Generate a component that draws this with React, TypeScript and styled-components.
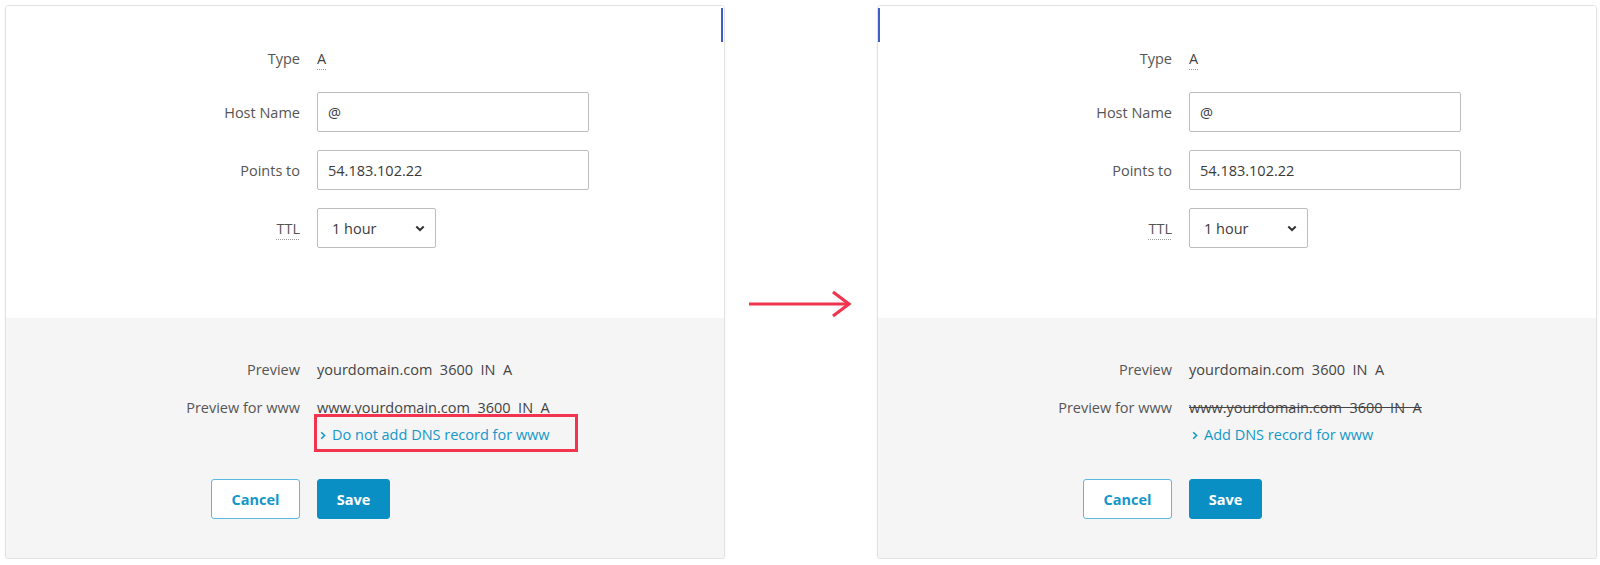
import React from 'react';
import styled, {createGlobalStyle} from 'styled-components';

const GlobalStyle = createGlobalStyle`
  html, body {
    margin: 0;
    padding: 0;
    background: #fff;
    font-family: "Open Sans", "Liberation Sans", Arial, sans-serif;
  }
`

interface RecordProps {
    barSide: 'left' | 'right',
    skipWww: boolean
}

const Chevron: React.FC = () => (
    <svg width="6" height="9" viewBox="0 0 6 9" aria-hidden="true">
        <path d="M1.2 1.2 L4.6 4.5 L1.2 7.8" fill="none" stroke="currentColor" strokeWidth="1.6"/>
    </svg>
)

const SelectCaret: React.FC = () => (
    <svg width="10" height="7" viewBox="0 0 10 7" aria-hidden="true">
        <path d="M1.3 1.5 L5 5 L8.7 1.5" fill="none" stroke="#333" strokeWidth="2"/>
    </svg>
)

const RecordCard: React.FC<RecordProps> = ({barSide, skipWww}) => {
    return (
        <Card $barSide={barSide}>
            <FormSection>
                <Grid>
                    <Label>Type</Label>
                    <TypeValue><Abbr>A</Abbr></TypeValue>

                    <Label>Host Name</Label>
                    <TextField>@</TextField>

                    <Label>Points to</Label>
                    <TextField>54.183.102.22</TextField>

                    <Label><Abbr>TTL</Abbr></Label>
                    <SelectBox>
                        <span>1 hour</span>
                        <SelectCaret/>
                    </SelectBox>
                </Grid>
            </FormSection>
            <PreviewSection>
                <Grid>
                    <PreviewLabel>Preview</PreviewLabel>
                    <PreviewValue>yourdomain.com  3600  IN  A</PreviewValue>

                    <PreviewLabel>Preview for www</PreviewLabel>
                    <div>
                        <PreviewValue $struck={skipWww}>www.yourdomain.com  3600  IN  A</PreviewValue>
                        <WwwToggle>
                            <Chevron/>
                            <span>{skipWww ? 'Add DNS record for www' : 'Do not add DNS record for www'}</span>
                            {!skipWww && <Highlight/>}
                        </WwwToggle>
                    </div>

                    <Actions>
                        <Button $variant='outline'>Cancel</Button>
                    </Actions>
                    <div>
                        <Button $variant='primary'>Save</Button>
                    </div>
                </Grid>
            </PreviewSection>
        </Card>
    )
}

export default function App() {
    return (
        <>
            <GlobalStyle/>
            <Page>
                <RecordCard barSide='right' skipWww={false}/>
                <ArrowColumn>
                    <svg width="104" height="30" viewBox="0 0 104 30" aria-hidden="true">
                        <path d="M0 15 H100" stroke="#f2344f" strokeWidth="3.2"/>
                        <path d="M84 3 L100 15 L84 27" fill="none" stroke="#f2344f" strokeWidth="3.2"/>
                    </svg>
                </ArrowColumn>
                <RecordCard barSide='left' skipWww={true}/>
            </Page>
        </>
    )
}

const Page = styled.div`
  display: flex;
  align-items: flex-start;
  padding: 5px 0 0 5px;
`

const Card = styled.div<{ $barSide: 'left' | 'right' }>`
  position: relative;
  width: 720px;
  flex: none;
  box-sizing: border-box;
  border: 1px solid #e2e2e2;
  border-radius: 4px;
  box-shadow: 0 1px 2px rgba(0, 0, 0, .08);
  background: #fff;
  overflow: hidden;

  &::after {
    content: '';
    position: absolute;
    top: 2px;
    ${p => p.$barSide === 'left' ? 'left: 0;' : 'right: 1px;'}
    width: 2px;
    height: 34px;
    background: #3f5fc4;
  }
`

const FormSection = styled.div`
  height: 312px;
  box-sizing: border-box;
  padding-top: 36px;
  background: #fff;
`

const PreviewSection = styled.div`
  height: 240px;
  box-sizing: border-box;
  padding-top: 41px;
  background: #f5f5f5;
`

const Grid = styled.div`
  display: grid;
  grid-template-columns: 294px 1fr;
  column-gap: 17px;
  row-gap: 18px;
  align-items: center;

  ${PreviewSection} & {
    row-gap: 16px;
    align-items: start;
  }
`

const Label = styled.div`
  text-align: right;
  font-size: 14.5px;
  color: #555;
`

const PreviewLabel = styled(Label)`
  line-height: 22px;
`

const TypeValue = styled.div`
  height: 32px;
  display: flex;
  align-items: center;
  font-size: 14.5px;
  color: #444;
`

const Abbr = styled.span`
  text-decoration: underline dotted #999;
  text-underline-offset: 5px;
  text-decoration-thickness: 1px;
`

const TextField = styled.div`
  width: 272px;
  height: 40px;
  box-sizing: border-box;
  display: flex;
  align-items: center;
  padding: 0 10px;
  border: 1px solid #bdbdbd;
  border-radius: 2px;
  background: #fff;
  font-size: 14.5px;
  color: #3a3a3a;
`

const SelectBox = styled(TextField)`
  width: 119px;
  justify-content: space-between;
  padding: 0 10px 0 14px;
`

const PreviewValue = styled.div<{ $struck?: boolean }>`
  font-size: 14.5px;
  line-height: 22px;
  color: #444;
  white-space: pre;
  text-decoration: ${p => p.$struck ? 'line-through' : 'none'};
`

const WwwToggle = styled.div`
  position: relative;
  display: inline-flex;
  align-items: center;
  gap: 6px;
  margin-top: 5px;
  padding-left: 3px;
  font-size: 14.5px;
  line-height: 22px;
  color: #1497c9;
`

const Highlight = styled.div`
  position: absolute;
  left: -3px;
  top: -10px;
  width: 264px;
  height: 38px;
  box-sizing: border-box;
  border: 3px solid #f2344f;
  pointer-events: none;
`

const Actions = styled.div`
  display: flex;
  justify-content: flex-end;
  margin-top: 17px;

  & + div {
    margin-top: 17px;
  }
`

const Button = styled.button<{ $variant: 'outline' | 'primary' }>`
  height: 40px;
  box-sizing: border-box;
  padding: 0;
  border-radius: 3px;
  font-family: "Open Sans", "Liberation Sans", Arial, sans-serif;
  font-size: 14.5px;
  font-weight: 700;
  cursor: pointer;
  border: 1px solid ${p => p.$variant === 'primary' ? '#0a8fc4' : '#5bb8e0'};
  background: ${p => p.$variant === 'primary' ? '#0a8fc4' : '#fff'};
  color: ${p => p.$variant === 'primary' ? '#fff' : '#1497c9'};
  width: ${p => p.$variant === 'primary' ? '73px' : '89px'};
`

const ArrowColumn = styled.div`
  width: 152px;
  flex: none;
  display: flex;
  justify-content: center;
  padding-top: 284px;
`
